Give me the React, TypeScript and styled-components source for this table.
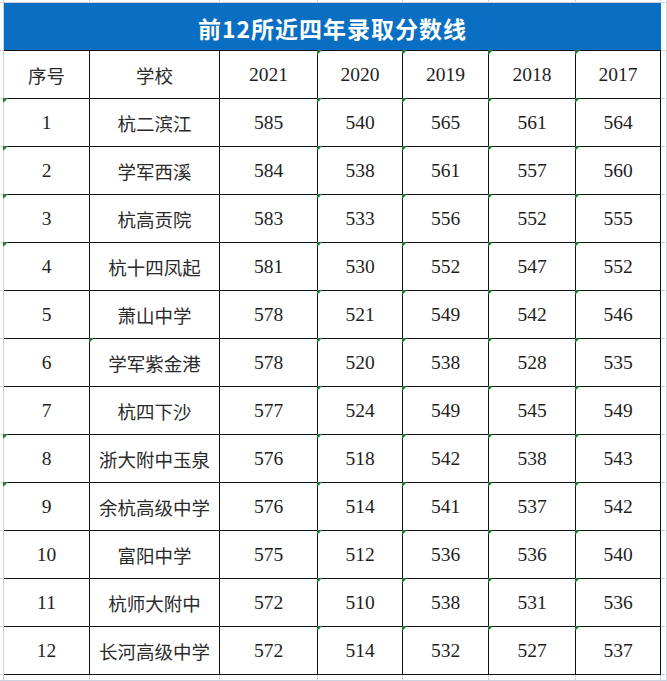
import React from 'react';
import styled, { createGlobalStyle } from 'styled-components';

const GlobalStyle = createGlobalStyle`
  html, body {
    margin: 0;
    padding: 0;
    background: #ffffff;
  }
  * {
    box-sizing: border-box;
  }
`;

// column widths: left gutter, 7 table columns, right gutter
const COLUMNS = [4, 86, 130, 98, 85, 86, 87, 85, 6];
const ROW_HEIGHT = 48;

const GRID_LINE = '#cdd3de';
const CELL_LINE = '#111111';

const Sheet = styled.div`
  display: grid;
  grid-template-columns: ${COLUMNS.map((w) => `${w}px`).join(' ')};
  grid-template-rows: 3px ${ROW_HEIGHT}px repeat(13, ${ROW_HEIGHT}px) 6px;
  width: 667px;
  height: 681px;
  overflow: hidden;
  background: #ffffff;
`;

const Gutter = styled.div`
  border-right: 1px solid ${GRID_LINE};
  border-bottom: 1px solid ${GRID_LINE};
`;

const Title = styled.div`
  grid-column: span 7;
  display: flex;
  align-items: center;
  justify-content: center;
  padding-top: 3px;
  background: #0a6fc2;
  border-bottom: 1px solid ${CELL_LINE};
  color: #ffffff;
  font-family: "Noto Sans CJK SC", "Noto Sans", sans-serif;
  font-weight: 600;
  font-size: 23px;
  letter-spacing: 1px;
`;

const Cell = styled.div<{ $flag?: boolean }>`
  position: relative;
  display: flex;
  align-items: center;
  justify-content: center;
  border-right: 1px solid ${CELL_LINE};
  border-bottom: 1px solid ${CELL_LINE};
  color: #1e1e1e;
  font-family: "Liberation Serif", "Noto Sans CJK SC", serif;
  font-size: 19.5px;
  white-space: nowrap;

  &::before {
    content: '';
    display: ${(p) => (p.$flag ? 'block' : 'none')};
    position: absolute;
    left: -1px;
    top: -1px;
    z-index: 1;
    border-top: 5px solid #1f7a34;
    border-right: 5px solid transparent;
  }
`;

const NameText = styled.span`
  font-family: "Noto Sans CJK SC", sans-serif;
  font-size: 18.5px;
  color: #2a2a2a;
`;

const years = ['2021', '2020', '2019', '2018', '2017'];

const schools: [number, string, number, number, number, number, number][] = [
  [1, '杭二滨江', 585, 540, 565, 561, 564],
  [2, '学军西溪', 584, 538, 561, 557, 560],
  [3, '杭高贡院', 583, 533, 556, 552, 555],
  [4, '杭十四凤起', 581, 530, 552, 547, 552],
  [5, '萧山中学', 578, 521, 549, 542, 546],
  [6, '学军紫金港', 578, 520, 538, 528, 535],
  [7, '杭四下沙', 577, 524, 549, 545, 549],
  [8, '浙大附中玉泉', 576, 518, 542, 538, 543],
  [9, '余杭高级中学', 576, 514, 541, 537, 542],
  [10, '富阳中学', 575, 512, 536, 536, 540],
  [11, '杭师大附中', 572, 510, 538, 531, 536],
  [12, '长河高级中学', 572, 514, 532, 527, 537],
];

// cells showing the little green "number stored as text" marker
const flaggedIndex = [1, 2, 3, 4, 8, 9];
const flaggedName = [6];

const GutterRow = () => (
  <>
    {COLUMNS.map((_, i) => (
      <Gutter key={i} />
    ))}
  </>
);

const App = () => {
  return (
    <>
      <GlobalStyle />
      <Sheet>
        <GutterRow />

        <Gutter />
        <Title>前12所近四年录取分数线</Title>
        <Gutter />

        <Gutter />
        <Cell>
          <NameText>序号</NameText>
        </Cell>
        <Cell>
          <NameText>学校</NameText>
        </Cell>
        {years.map((y, i) => (
          <Cell key={y} $flag={i > 0}>
            {y}
          </Cell>
        ))}
        <Gutter />

        {schools.map(([no, name, ...scores]) => (
          <React.Fragment key={no}>
            <Gutter />
            <Cell $flag={flaggedIndex.includes(no)}>{no}</Cell>
            <Cell $flag={flaggedName.includes(no)}>
              <NameText>{name}</NameText>
            </Cell>
            {scores.map((s, i) => (
              <Cell key={i} $flag={i > 0}>
                {s}
              </Cell>
            ))}
            <Gutter />
          </React.Fragment>
        ))}

        <GutterRow />
      </Sheet>
    </>
  );
};

export default App;
